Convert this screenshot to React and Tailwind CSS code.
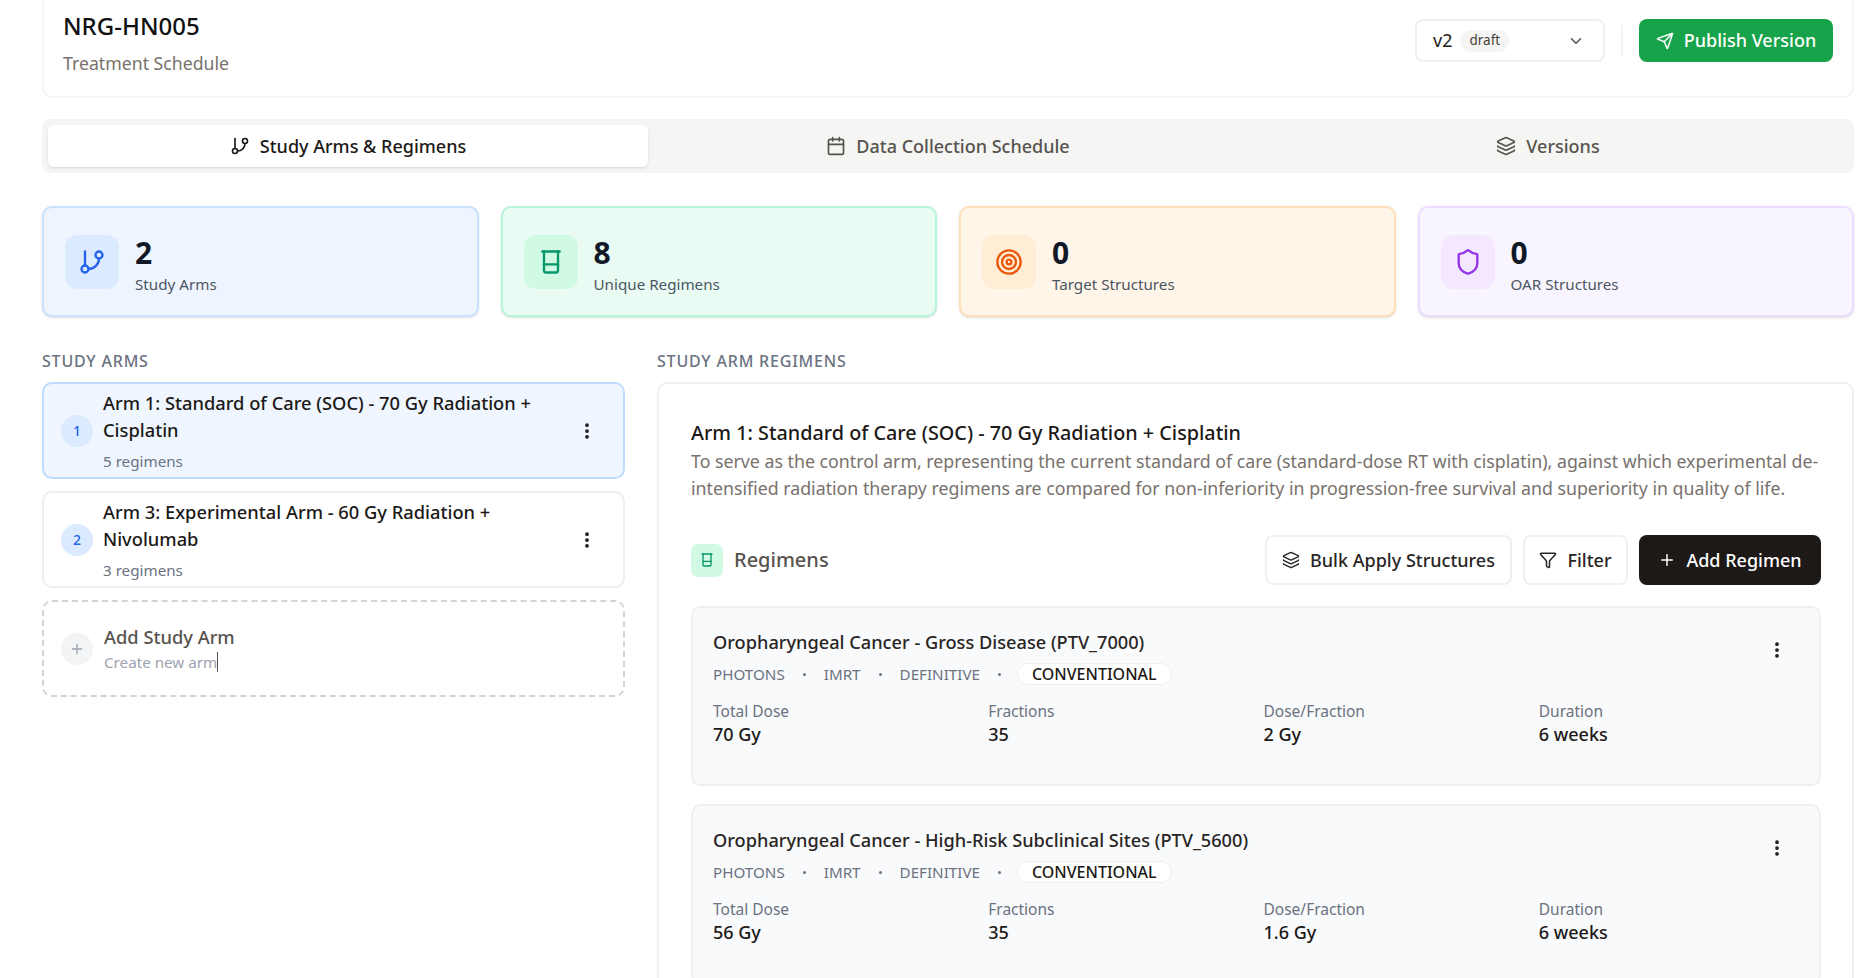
import React from "react";
import {
  Beaker,
  Calendar,
  ChevronDown,
  EllipsisVertical,
  Filter,
  GitBranch,
  Layers,
  Plus,
  Send,
  Shield,
  Target,
} from "lucide-react";

const stats = [
  { value: 2, label: "Study Arms", Icon: GitBranch, card: "bg-[#eef5ff] border-[#c9e0fe]", box: "bg-[#dbeafe]", icon: "text-[#2563eb]" },
  { value: 8, label: "Unique Regimens", Icon: Beaker, card: "bg-[#e9fbf3] border-[#b7f5d8]", box: "bg-[#d1fae5]", icon: "text-[#059669]" },
  { value: 0, label: "Target Structures", Icon: Target, card: "bg-[#fff5e9] border-[#fedfb8]", box: "bg-[#ffedd5]", icon: "text-[#ea580c]" },
  { value: 0, label: "OAR Structures", Icon: Shield, card: "bg-[#f9f5ff] border-[#ecdcff]", box: "bg-[#f3e8ff]", icon: "text-[#9333ea]" },
];

const regimens = [
  { title: "Oropharyngeal Cancer - Gross Disease (PTV_7000)", dose: "70 Gy", fractions: "35", perFraction: "2 Gy", duration: "6 weeks" },
  { title: "Oropharyngeal Cancer - High-Risk Subclinical Sites (PTV_5600)", dose: "56 Gy", fractions: "35", perFraction: "1.6 Gy", duration: "6 weeks" },
];

const Stat = ({ value, label, Icon, card, box, icon }) => (
  <div className={`h-[111px] rounded-[10px] border-2 flex items-center gap-[16px] pl-[21px] shadow-sm ${card}`}>
    <div className={`w-[54px] h-[54px] rounded-[12px] flex items-center justify-center ${box}`}>
      <Icon className={`w-[28px] h-[28px] ${icon}`} strokeWidth={2} />
    </div>
    <div className="pt-[7px]">
      <div className="text-[30px] leading-[36px] font-bold text-[#111827]">{value}</div>
      <div className="text-[15.2px] leading-[24px] mt-[1px] text-[#4b5563]">{label}</div>
    </div>
  </div>
);

const ArmCard = ({ num, line1, line2, count, active }) => (
  <div
    className={`h-[97px] rounded-[10px] border-2 flex items-center pl-[17px] pr-[26px] ${
      active ? "bg-[#eff6ff] border-[#bfdbfe]" : "bg-white border-[#eeeeee]"
    }`}
  >
    <div className="w-[32px] h-[32px] rounded-full bg-[#dbeafe] text-[#2563eb] text-[14px] font-medium flex items-center justify-center shrink-0">
      {num}
    </div>
    <div className="ml-[10px] flex-1">
      <div className="text-[18.3px] leading-[27px] font-medium text-[#1c1917]">{line1}</div>
      <div className="text-[18.3px] leading-[27px] font-medium text-[#1c1917]">{line2}</div>
      <div className="text-[15.2px] leading-[24px] mt-[6px] text-[#6b7280]">{count}</div>
    </div>
    <EllipsisVertical className="w-[20px] h-[20px] text-[#1c1917]" strokeWidth={2.5} />
  </div>
);

const Metric = ({ label, value }) => (
  <div>
    <div className="text-[15.5px] leading-[22px] text-[#6b7280]">{label}</div>
    <div className="text-[18px] leading-[25px] font-medium text-[#1c1917]">{value}</div>
  </div>
);

const Dot = () => <span className="w-[3px] h-[3px] rounded-full bg-[#6b7280] mx-[18px]" />;

const RegimenCard = ({ title, dose, fractions, perFraction, duration }) => (
  <div className="h-[180px] rounded-[10px] border-2 border-[#f0f0f0] bg-[#f9fafb] pl-[20px] pr-[5px] pt-[21px] shrink-0">
    <div className="flex justify-between items-start pr-[27px]">
      <div className="text-[18.2px] leading-[26px] font-medium text-[#292524]">{title}</div>
      <EllipsisVertical className="w-[20px] h-[20px] mt-[11px] text-[#1c1917]" strokeWidth={2.5} />
    </div>
    <div className="flex items-center h-[22px] mt-[3px] text-[15.2px] text-[#6b7280]">
      <span>PHOTONS</span>
      <Dot />
      <span>IMRT</span>
      <Dot />
      <span>DEFINITIVE</span>
      <Dot />
      <span className="h-[22px] px-[14px] -ml-[2px] rounded-full border border-[#eeeeee] bg-white text-[16px] text-[#1c1917] font-medium flex items-center">
        CONVENTIONAL
      </span>
    </div>
    <div className="grid grid-cols-4 mt-[15px]">
      <Metric label="Total Dose" value={dose} />
      <Metric label="Fractions" value={fractions} />
      <Metric label="Dose/Fraction" value={perFraction} />
      <Metric label="Duration" value={duration} />
    </div>
  </div>
);

const App = () => {
  return (
    <div className="h-[978px] overflow-hidden bg-white pl-[42px] pr-[7px] font-['Noto_Sans',sans-serif]">
      {/* Header */}
      <div className="h-[98px] border-x-2 border-b-2 border-[#f5f5f5] rounded-b-[10px] flex justify-between pl-[19px] pr-[19px]">
        <div>
          <div className="text-[24px] leading-[30px] font-medium text-[#111111] mt-[11px]">NRG-HN005</div>
          <div className="text-[17.7px] leading-[26px] text-[#78716c] mt-[9px]">Treatment Schedule</div>
        </div>
        <div className="flex items-center h-[43px] mt-[19px]">
          <div className="w-[190px] h-[43px] rounded-[8px] border-2 border-[#f0f0f0] flex items-center pl-[16px] pr-[18px]">
            <span className="text-[18px] text-[#1c1917]">v2</span>
            <span className="ml-[8px] h-[22px] px-[9px] rounded-full bg-[#f5f5f4] text-[13.5px] text-[#44403c] flex items-center">draft</span>
            <ChevronDown className="ml-auto w-[18px] h-[18px] text-[#57534e]" />
          </div>
          <div className="w-[2px] h-[32px] bg-[#f3f3f3] mx-[16px]" />
          <button className="w-[194px] h-[43px] rounded-[8px] bg-[#16a34a] text-white text-[18px] font-medium flex items-center justify-center gap-[10px]">
            <Send className="w-[18px] h-[18px]" />
            Publish Version
          </button>
        </div>
      </div>

      {/* Tabs */}
      <div className="h-[54px] mt-[21px] rounded-[8px] bg-[#f5f5f4] p-[6px] flex">
        <div className="flex-1 rounded-[6px] bg-white shadow-sm flex items-center justify-center gap-[10px] text-[18px] font-medium text-[#1c1917]">
          <GitBranch className="w-[20px] h-[20px]" />
          Study Arms & Regimens
        </div>
        <div className="flex-1 flex items-center justify-center gap-[10px] text-[18px] font-medium text-[#57534e]">
          <Calendar className="w-[20px] h-[20px]" />
          Data Collection Schedule
        </div>
        <div className="flex-1 flex items-center justify-center gap-[10px] text-[18px] font-medium text-[#57534e]">
          <Layers className="w-[20px] h-[20px]" />
          Versions
        </div>
      </div>

      {/* Stats */}
      <div className="grid grid-cols-4 gap-[22px] mt-[33px]">
        {stats.map((s) => (
          <Stat key={s.label} {...s} />
        ))}
      </div>

      {/* Content */}
      <div className="grid grid-cols-[583px_1fr] gap-[32px] mt-[33px]">
        <div>
          <h3 className="text-[16px] leading-[22px] tracking-[0.05em] font-medium text-[#6b7280] mb-[10px]">STUDY ARMS</h3>
          <div className="flex flex-col gap-[12px]">
            <ArmCard num={1} line1="Arm 1: Standard of Care (SOC) - 70 Gy Radiation +" line2="Cisplatin" count="5 regimens" active />
            <ArmCard num={2} line1="Arm 3: Experimental Arm - 60 Gy Radiation +" line2="Nivolumab" count="3 regimens" />
            <div className="h-[97px] rounded-[10px] border-2 border-dashed border-[#d6d3d1] flex items-center pl-[17px]">
              <div className="w-[32px] h-[32px] rounded-full bg-[#f3f4f6] flex items-center justify-center">
                <Plus className="w-[16px] h-[16px] text-[#9ca3af]" />
              </div>
              <div className="ml-[11px]">
                <div className="text-[18.3px] leading-[27px] font-medium text-[#57534e]">Add Study Arm</div>
                <div className="text-[15.2px] leading-[24px] text-[#9ca3af] flex items-center">
                  Create new arm
                  <span className="w-px h-[20px] bg-[#57534e]" />
                </div>
              </div>
            </div>
          </div>
        </div>

        <div>
          <h3 className="text-[16px] leading-[22px] tracking-[0.05em] font-medium text-[#6b7280] mb-[10px]">STUDY ARM REGIMENS</h3>
          <div className="h-[700px] rounded-t-[10px] border-2 border-[#f0f0f0] pl-[32px] pr-[31px] pt-[35px]">
            <div className="text-[19.8px] leading-[28px] font-medium text-[#1c1917]">Arm 1: Standard of Care (SOC) - 70 Gy Radiation + Cisplatin</div>
            <p className="text-[17.75px] leading-[27px] text-[#78716c] mt-[1px]">
              To serve as the control arm, representing the current standard of care (standard-dose RT with cisplatin), against which experimental de-intensified radiation therapy regimens are compared for non-inferiority in progression-free survival and superiority in quality of life.
            </p>
            <div className="flex items-center justify-between mt-[33px]">
              <div className="flex items-center gap-[11px]">
                <div className="w-[32px] h-[33px] rounded-[7px] bg-[#d1fae5] flex items-center justify-center">
                  <Beaker className="w-[16px] h-[16px] text-[#059669]" />
                </div>
                <span className="text-[20px] font-medium text-[#57534e]">Regimens</span>
              </div>
              <div className="flex gap-[11px]">
                <button className="w-[247px] h-[50px] rounded-[8px] border-2 border-[#f0f0f0] bg-white flex items-center justify-center gap-[10px] text-[18px] font-medium text-[#292524]">
                  <Layers className="w-[18px] h-[18px]" />
                  Bulk Apply Structures
                </button>
                <button className="w-[105px] h-[50px] rounded-[8px] border-2 border-[#f0f0f0] bg-white flex items-center justify-center gap-[10px] text-[18px] font-medium text-[#292524]">
                  <Filter className="w-[18px] h-[18px]" />
                  Filter
                </button>
                <button className="w-[182px] h-[50px] rounded-[8px] bg-[#1c1917] text-white flex items-center justify-center gap-[10px] text-[18px] font-medium">
                  <Plus className="w-[18px] h-[18px]" />
                  Add Regimen
                </button>
              </div>
            </div>
            <div className="flex flex-col gap-[18px] mt-[21px]">
              {regimens.map((r) => (
                <RegimenCard key={r.title} {...r} />
              ))}
            </div>
          </div>
        </div>
      </div>
    </div>
  );
};

export default App;
